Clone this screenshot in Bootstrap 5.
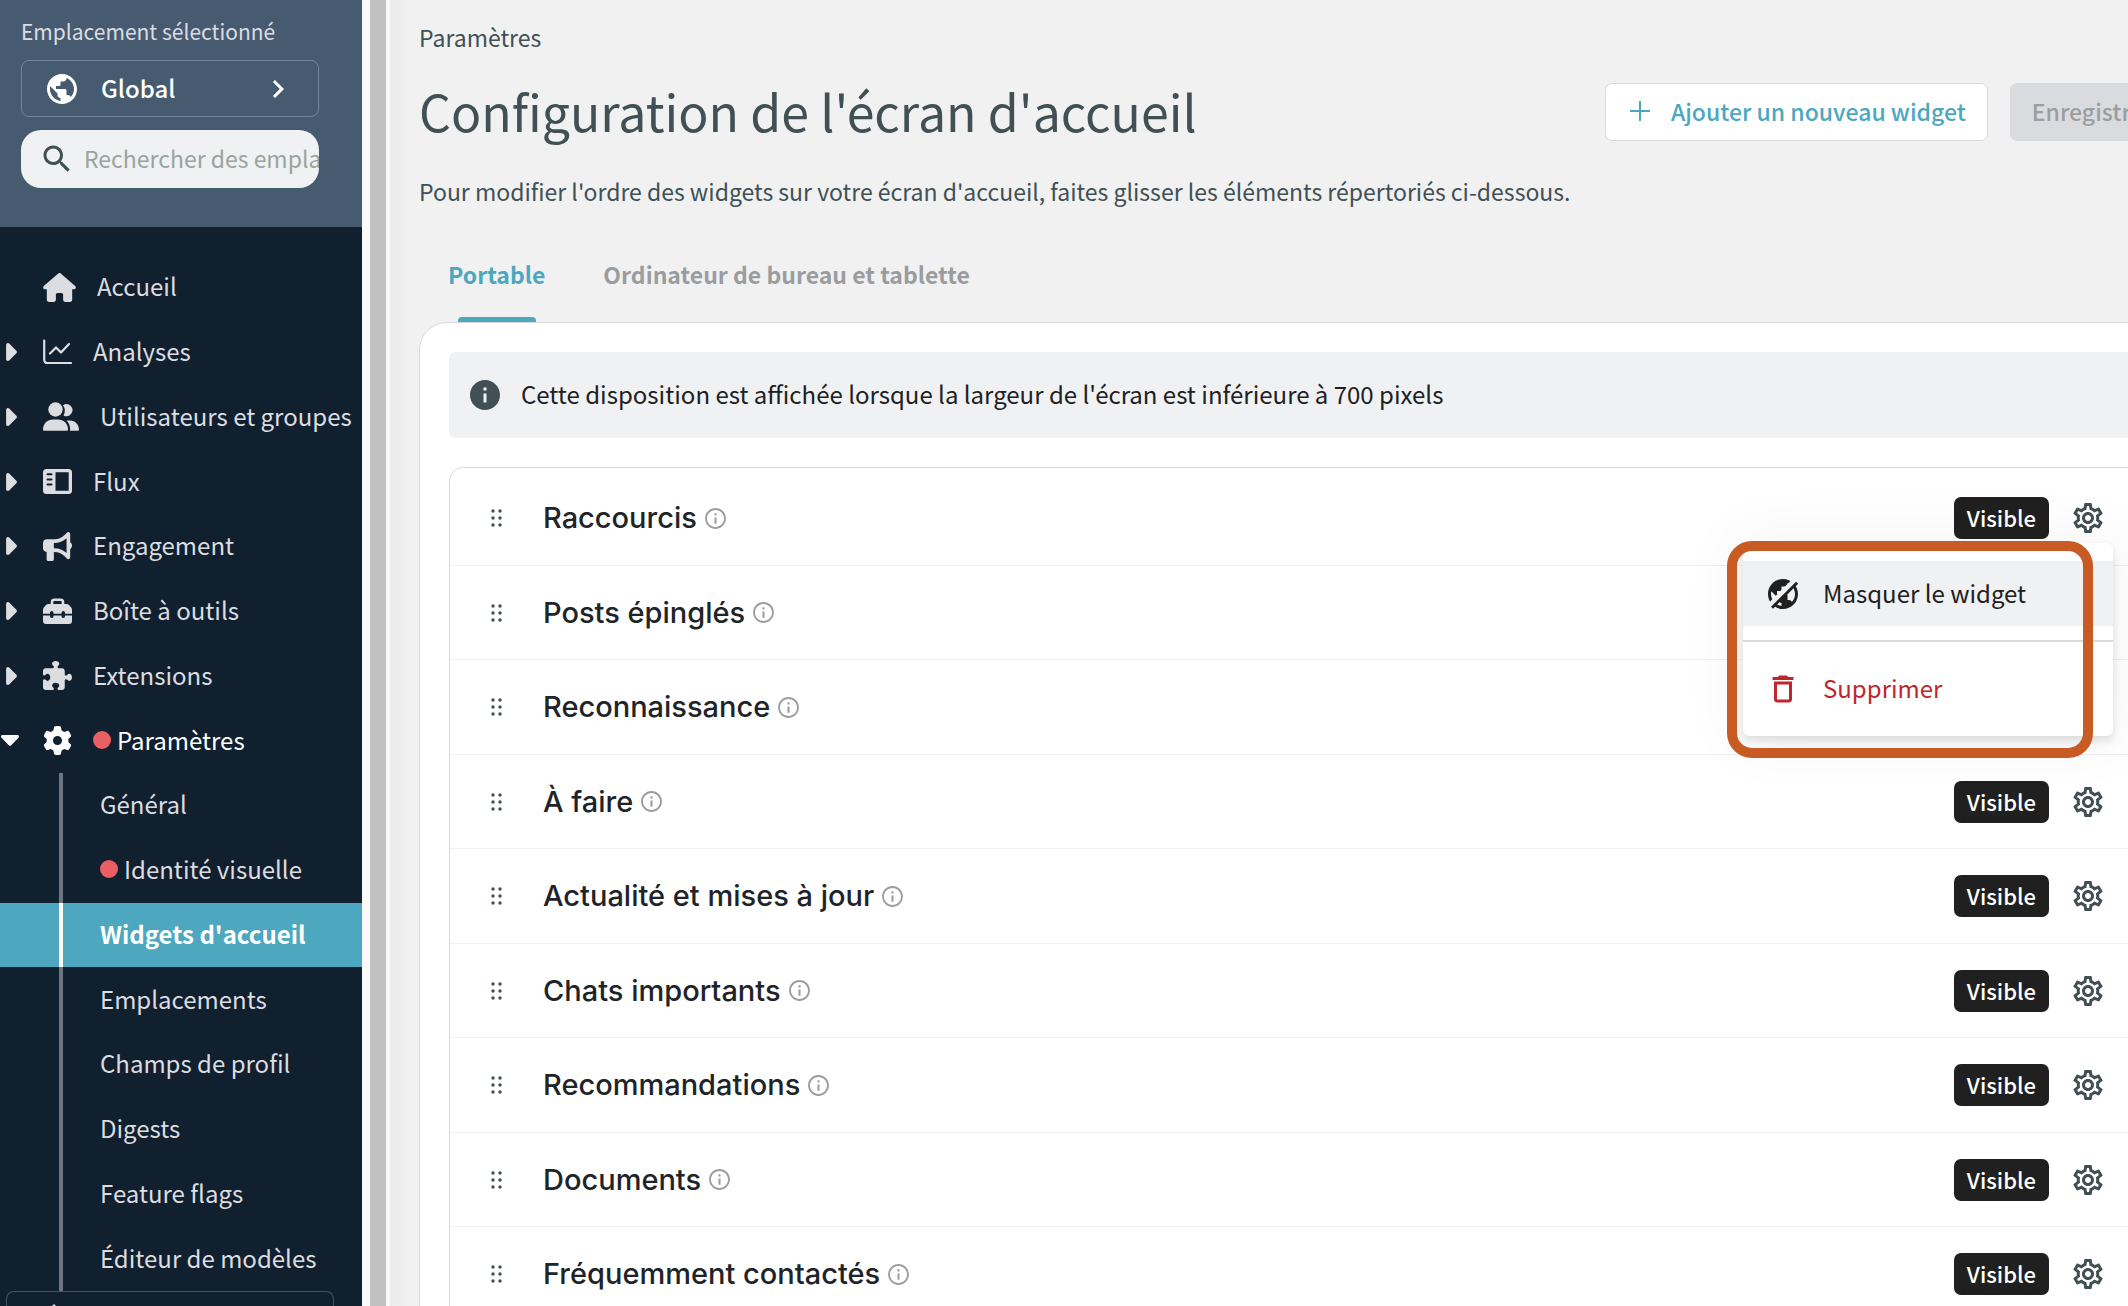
<!DOCTYPE html>
<html lang="fr">
<head>
<meta charset="utf-8">
<meta name="viewport" content="width=device-width, initial-scale=1">
<title>Configuration de l'écran d'accueil</title>
<link rel="stylesheet" href="https://cdn.jsdelivr.net/npm/bootstrap@5.3.0/dist/css/bootstrap.min.css">
<style>
  :root { --teal: #4ca7bf; --navy: #11202f; --slate: #465b70; --ink: #405055; --line: #d9dadd; }
  body { font-family: "Noto Sans CJK SC", "Noto Sans", sans-serif; font-size: 24px; line-height: 36px; color: var(--ink); background: #f1f1f1; }
  svg { display: block; flex: none; fill: currentColor; }
  .i36 { width: 36px; height: 36px; }

  /* sidebar */
  .side { width: 362px; background: var(--navy); color: #dcdde1; }
  .side-head { background: var(--slate); height: 227px; padding: 13px 43px 0 21px; }
  .side-head .caption-line { font-size: 21px; margin-bottom: 11px; }
  .loc-btn { height: 57px; border: 1px solid #73859a; border-radius: 8px; color: #fff; background: transparent; font-weight: 500; padding: 0 22px; }
  .loc-btn span { margin-left: 21px; padding-bottom: 2px; }
  .loc-search { height: 58px; margin-top: 13px; border-radius: 20px; background: #f0f1f3; color: var(--ink); padding-left: 18px; overflow: hidden; }
  .loc-search input { border: 0; background: transparent; outline: 0; min-width: 0; padding: 0 0 2px; margin-left: 9px; font-size: 23px; color: var(--ink); }
  .loc-search input::placeholder { color: #9aa49c; opacity: 1; }
  .side-nav { padding-top: 28px; min-height: 0; }
  .side-nav a { flex: 1 1 0; min-height: 0; color: inherit; text-decoration: none; white-space: nowrap; }
  .side-nav a.open { color: #fff; }
  .caret-box { width: 43px; padding-left: 6px; }
  .open .caret-box { padding-left: 1px; }
  .nav-label { margin-left: 21px; }
  .nav-label, .sub-nav a { padding-bottom: 2px; }
  .sub-nav { flex: 8 1 0; min-height: 0; }
  .sub-nav a { padding-left: 37px; margin-left: 59px; border-left: 4px solid #6d7680; }
  .sub-nav .here { margin-left: 0; padding-left: 0; background: var(--teal); color: #fff; font-weight: 700; border: 0; }
  .sub-nav .here::before { content: ""; align-self: stretch; width: 4px; margin: 0 37px -2px 59px; background: #fff; }
  .red-dot { width: 18px; height: 18px; border-radius: 50%; background: #ea6062; margin-right: 6px; }
  .side-foot { height: 15px; margin: 0 28px 0 6px; border: 1px solid #46535f; border-bottom: 0; border-radius: 8px 8px 0 0; padding: 12px 0 0 39px; overflow: hidden; }

  .scroll-track { width: 28px; background: #fafafa; border-right: 4px solid #fafafa; padding-left: 8px; }
  .scroll-track div { background: #c1c1c1; height: 100%; }

  /* content */
  .page-main { min-width: 0; background: linear-gradient(90deg, #ebebeb, #f1f1f1 20px); padding-left: 29px; overflow: hidden; font-size: 23px; }
  .page-wide { margin-right: -47px; }
  .crumb { padding-top: 19px; }
  h1 { font-size: 50px; line-height: 72px; font-weight: 400; margin: 0; color: var(--ink); }
  .head-row { margin-top: 19px; }
  .head-acts { gap: 22px; }
  .act { height: 58px; border-radius: 7px; font-weight: 500; padding: 0 21px 2px; border: 1px solid var(--line); white-space: nowrap; }
  .act-add { background: #fff; color: var(--teal); padding-left: 24px; gap: 21px; }
  .act-save, .act-save:disabled { min-width: 165px; background: #dadbdf; color: #9c9da0; border-color: #dadbdf; }
  .intro { margin-top: 27px; }
  .tabs-row { margin: 19px 0 0 29px; gap: 58px; height: 94px; }
  .tabs-row button { border: 0; background: none; padding: 28px 0 0; font-weight: 700; color: #9b9c9f; display: flex; flex-direction: column; align-items: center; justify-content: space-between; }
  .tabs-row .on { color: var(--teal); }
  .tabs-row .on::after { content: ""; width: 78px; height: 5px; border-radius: 4px 4px 0 0; background: var(--teal); }
  .panel { background: #fff; border: 1px solid var(--line); border-radius: 28px; padding: 29px; height: 1100px; }
  .notice { background: #f0f1f3; border-radius: 7px; height: 86px; padding: 0 18px; gap: 18px; font-size: 24px; }
  .notice span { color: #202020; padding-bottom: 3px; }
  .wlist { margin-top: 29px; border: 1px solid var(--line); border-radius: 14px; padding-top: 3px; }
  .wrow { height: 95px; border-bottom: 1px solid #eff0f1; padding: 0 38px 0 41px; }
  .wrow:nth-child(4n) { height: 94px; }
  .wrow:nth-child(4n+2) { height: 94px; }
  .wname { font-family: Inter, "Noto Sans", sans-serif; font-size: 29px; font-weight: 500; color: #202428; margin-left: 40px; }
  .i25 { width: 25px; height: 25px; margin-left: 6px; color: #9c9da0; }
  .tag { background: #202020; color: #fff; font-size: 22px; font-weight: 500; height: 42px; line-height: 40px; border-radius: 7px; padding: 0 13px; }
  .gear { border: 0; background: none; padding: 0; color: var(--ink); margin-left: 21px; }
  .pop { position: absolute; z-index: 2; top: 72px; right: 31px; width: 370px; background: #fff; border-radius: 7px; padding: 18px 0 15px; box-shadow: 0 5px 10px rgba(0,0,0,.12), 0 0 60px 12px rgba(0,0,0,.04); font-size: 24px; }
  .pop button { border: 0; background: none; width: 100%; height: 65px; padding: 0 22px; gap: 22px; color: #202020; }
  .pop button span { padding-bottom: 2px; }
  .pop .hov { background: #f0f1f3; }
  .pop hr { margin: 14px 0; border: 0; height: 2px; background: #dadbdf; opacity: 1; }
  .pop .del { color: #c0262d; }
  .callout { position: absolute; z-index: 3; top: 70px; right: 51px; width: 366px; height: 217px; border: 10px solid #c85a24; border-radius: 25px; pointer-events: none; }
</style>
<script src="https://cdn.jsdelivr.net/npm/bootstrap@5.3.0/dist/js/bootstrap.bundle.min.js"></script>
</head>
<body class="vh-100 overflow-hidden">
<svg width="0" height="0" class="position-absolute" aria-hidden="true">
  <symbol id="caret" viewBox="64 96 192 320"><path d="M246.6 278.6c12.500-12.500 12.500-32.800 0-45.300l-128-128c-9.200-9.200-22.900-11.900-34.900-6.900s-19.800 16.600-19.800 29.600l0 256c0 12.900 7.800 24.600 19.800 29.600s25.700 2.200 34.900-6.900l128-128z"/></symbol>
  <symbol id="globe" viewBox="0 0 24 24"><path d="M12 2C6.480 2 2 6.480 2 12s4.480 10 10 10 10-4.480 10-10S17.520 2 12 2zm-1 17.930c-3.950-.49-7-3.850-7-7.930 0-.62.08-1.210.21-1.790L9 15v1c0 1.100.9 2 2 2v1.930zm6.900-2.540c-.26-.81-1-1.390-1.900-1.390h-1v-3c0-.55-.45-1-1-1H8v-2h2c.55 0 1-.45 1-1V7h2c1.100 0 2-.9 2-2v-.41c2.930 1.190 5 4.060 5 7.410 0 2.080-.8 3.970-2.100 5.390z"/></symbol>
  <symbol id="info" viewBox="0 0 24 24"><path d="M11 7h2v2h-2zm0 4h2v6h-2zm1-9C6.480 2 2 6.480 2 12s4.480 10 10 10 10-4.480 10-10S17.520 2 12 2zm0 18.200c-4.500 0-8.200-3.700-8.200-8.200S7.500 3.800 12 3.800s8.200 3.700 8.200 8.200-3.700 8.200-8.200 8.200z"/></symbol>
  <symbol id="drag" viewBox="0 0 12 18"><circle cx="2" cy="2" r="1.700"/><circle cx="9" cy="2" r="1.700"/><circle cx="2" cy="9" r="1.700"/><circle cx="9" cy="9" r="1.700"/><circle cx="2" cy="16" r="1.700"/><circle cx="9" cy="16" r="1.700"/></symbol>
  <symbol id="cog" viewBox="0 0 24 24"><path d="M19.430 12.980c.04-.32.07-.64.07-.98 0-.34-.03-.66-.07-.98l2.110-1.650c.19-.15.24-.42.12-.64l-2-3.460c-.09-.16-.26-.25-.44-.25-.06 0-.12.01-.17.03l-2.490 1c-.52-.4-1.080-.73-1.690-.98l-.38-2.650C14.460 2.180 14.250 2 14 2h-4c-.25 0-.46.18-.49.42l-.38 2.650c-.61.25-1.170.59-1.690.98l-2.490-1c-.06-.02-.12-.03-.18-.03-.17 0-.34.09-.43.25l-2 3.460c-.13.22-.07.49.12.64l2.110 1.650c-.04.32-.07.65-.07.98 0 .33.03.66.07.98l-2.110 1.650c-.19.15-.24.42-.12.64l2 3.460c.09.16.26.25.44.25.06 0 .12-.01.17-.03l2.490-1c.52.4 1.080.73 1.690.98l.38 2.650c.03.24.24.42.49.42h4c.25 0 .46-.18.49-.42l.38-2.650c.61-.25 1.170-.59 1.690-.98l2.490 1c.06.02.12.03.18.03.17 0 .34-.09.43-.25l2-3.460c.12-.22.07-.49-.12-.64l-2.110-1.650zm-1.980-1.710c.04.31.05.52.05.73 0 .21-.02.43-.05.73l-.14 1.130.89.7 1.080.84-.7 1.210-1.270-.51-1.040-.42-.9.68c-.43.32-.84.56-1.250.73l-1.060.43-.16 1.130-.2 1.350h-1.400l-.19-1.350-.16-1.130-1.060-.43c-.43-.18-.83-.41-1.230-.71l-.91-.7-1.060.43-1.270.51-.7-1.210 1.080-.84.89-.7-.14-1.130c-.03-.31-.05-.54-.05-.74s.02-.43.05-.73l.14-1.130-.89-.7-1.080-.84.7-1.210 1.270.51 1.040.42.9-.68c.43-.32.84-.56 1.250-.73l1.060-.43.16-1.130.2-1.350h1.390l.19 1.350.16 1.130 1.060.43c.43.18.83.41 1.230.71l.91.7 1.060-.43 1.270-.51.7 1.210-1.070.85-.89.7.14 1.130zM12 8c-2.210 0-4 1.790-4 4s1.790 4 4 4 4-1.790 4-4-1.790-4-4-4zm0 6c-1.100 0-2-.9-2-2s.9-2 2-2 2 .9 2 2-.9 2-2 2z"/></symbol>
</svg>

<div class="d-flex h-100">
  <aside class="side d-flex flex-column flex-shrink-0 h-100 overflow-hidden">
    <div class="side-head flex-shrink-0">
      <div class="caption-line">Emplacement sélectionné</div>
      <button type="button" class="loc-btn d-flex align-items-center w-100">
        <svg class="i36"><use href="#globe"/></svg>
        <span class="me-auto">Global</span>
        <svg class="i36" viewBox="0 0 24 24"><path d="M10 6 8.590 7.410 13.170 12l-4.580 4.590L10 18l6-6z"/></svg>
      </button>
      <label class="loc-search d-flex align-items-center">
        <svg class="i36" viewBox="0 0 24 24"><path d="M15.500 14h-.79l-.28-.27C15.410 12.590 16 11.110 16 9.500 16 5.910 13.090 3 9.500 3S3 5.910 3 9.500 5.910 16 9.500 16c1.610 0 3.090-.59 4.230-1.570l.27.28v.79l5 4.990L20.490 19l-4.990-5zm-6 0C7.010 14 5 11.990 5 9.500S7.010 5 9.500 5 14 7.010 14 9.500 11.990 14 9.500 14z"/></svg>
        <input type="text" class="flex-fill" aria-label="Rechercher" placeholder="Rechercher des emplacements">
      </label>
    </div>
    <nav class="side-nav d-flex flex-column flex-fill">
      <a href="#" class="d-flex align-items-center"><span class="caret-box"></span>
        <svg width="33" height="29" viewBox="0 0 576 512"><path d="M575.800 255.500c0 18-15 32.100-32 32.100h-32l.7 160.200c0 2.700-.2 5.400-.5 8.100V472c0 22.100-17.900 40-40 40H392c-22.100 0-40-17.900-40-40v-88c0-17.700-14.300-32-32-32h-64c-17.700 0-32 14.300-32 32v88c0 22.100-17.900 40-40 40h-80c-22.100 0-40-17.900-40-40V287.600H32c-18 0-32-14-32-32.100c0-9 3-17 10-24L266.400 8c7-7 15-8 22-8s15 2 21 7L564.800 231.500c8 7 12 15 11 24z"/></svg>
        <span class="nav-label">Accueil</span></a>
      <a href="#" class="d-flex align-items-center"><span class="caret-box"><svg width="11" height="18"><use href="#caret"/></svg></span>
        <svg width="29" height="29" viewBox="0 0 29 29"><path d="M1.200 2.500V22a3 3 0 0 0 3 3H28M7 15.500l6-6 5 5 8-8.500" fill="none" stroke="currentColor" stroke-width="2.200" stroke-linecap="round" stroke-linejoin="round"/></svg>
        <span class="nav-label">Analyses</span></a>
      <a href="#" class="d-flex align-items-center"><span class="caret-box"><svg width="11" height="18"><use href="#caret"/></svg></span>
        <svg width="36" height="29" viewBox="0 0 36 29"><circle cx="12.500" cy="7.500" r="7.200"/><path d="M0 27.500C0 21.500 4.500 17.500 10 17.500h5c5.500 0 10 4 10 10 0 .8-.6 1.300-1.300 1.300H1.300C.6 28.800 0 28.300 0 27.500z"/><path d="M20 3.200A6 6 0 1 1 20.500 13.400 9.500 9.500 0 0 0 20 3.200zM23.500 18.500H27c5 0 9 4 9 9 0 .8-.6 1.300-1.300 1.300h-8c.3-.5.4-1 .4-1.500 0-3.600-1.300-6.600-3.600-8.800z"/></svg>
        <span class="nav-label">Utilisateurs et groupes</span></a>
      <a href="#" class="d-flex align-items-center"><span class="caret-box"><svg width="11" height="18"><use href="#caret"/></svg></span>
        <svg width="29" height="25" viewBox="0 0 29 25"><path fill-rule="evenodd" d="M3.500 0h22A3.500 3.500 0 0 1 29 3.500v18a3.500 3.500 0 0 1-3.500 3.500h-22A3.500 3.500 0 0 1 0 21.500v-18A3.500 3.500 0 0 1 3.500 0zM12.500 3.200v18.600h13.200V3.200zM4.500 4.200a1 1 0 0 0 0 2h4a1 1 0 0 0 0-2zM4.500 9.400a1 1 0 0 0 0 2h4a1 1 0 0 0 0-2zM4.500 14.600a1 1 0 0 0 0 2h4a1 1 0 0 0 0-2z"/></svg>
        <span class="nav-label">Flux</span></a>
      <a href="#" class="d-flex align-items-center"><span class="caret-box"><svg width="11" height="18"><use href="#caret"/></svg></span>
        <svg width="29" height="29" viewBox="0 0 512 512"><path d="M480 32c0-12.900-7.800-24.600-19.800-29.600s-25.700-2.200-34.900 6.900L381.700 53c-48 48-113.100 75-181 75H64c-35.300 0-64 28.700-64 64v96c0 35.300 28.700 64 64 64v128c0 17.700 14.300 32 32 32h64c17.700 0 32-14.300 32-32V352h8.700c67.900 0 133 27 181 75l43.600 43.600c9.200 9.200 22.900 11.900 34.900 6.900s19.800-16.600 19.800-29.600V300.400c18.600-8.800 32-32.500 32-60.400s-13.400-51.600-32-60.400V32zm-64 76.700v262.600C357.200 317.800 280.500 288 200.700 288H192v-96h8.700c79.800 0 156.500-29.800 215.300-83.300z"/></svg>
        <span class="nav-label">Engagement</span></a>
      <a href="#" class="d-flex align-items-center"><span class="caret-box"><svg width="11" height="18"><use href="#caret"/></svg></span>
        <svg width="29" height="26" viewBox="0 0 29 26"><path d="M9 7V4a2.300 2.300 0 0 1 2.300-2.300h6.400A2.300 2.300 0 0 1 20 4v3" fill="none" stroke="currentColor" stroke-width="2.600"/><path d="M5.500 6h18c1 0 1.800.4 2.500 1l2 2.200c.6.700 1 1.500 1 2.500v4h-7v-1a1.500 1.500 0 0 0-3.500 0v1H10.500v-1a1.500 1.500 0 0 0-3.500 0v1H0v-4c0-1 .4-1.800 1-2.500L3 7c.7-.6 1.500-1 2.500-1zM0 17.500h7v.8a1.700 1.700 0 0 0 3.500 0v-.8h8v.8a1.700 1.700 0 0 0 3.500 0v-.8h7V23a3 3 0 0 1-3 3H3a3 3 0 0 1-3-3z"/></svg>
        <span class="nav-label">Boîte à outils</span></a>
      <a href="#" class="d-flex align-items-center"><span class="caret-box"><svg width="11" height="18"><use href="#caret"/></svg></span>
        <svg width="29" height="29" viewBox="0 0 512 512"><path d="M192 104.800c0-9.200-5.800-17.300-13.200-22.800C167.200 73.300 160 61.300 160 48c0-26.500 28.700-48 64-48s64 21.500 64 48c0 13.300-7.200 25.300-18.800 34c-7.400 5.500-13.200 13.600-13.200 22.800c0 12.800 10.400 23.200 23.200 23.200H336c26.500 0 48 21.500 48 48v56.800c0 12.800 10.400 23.200 23.200 23.200c9.200 0 17.300-5.800 22.800-13.200c8.700-11.600 20.700-18.800 34-18.800c26.500 0 48 28.700 48 64s-21.500 64-48 64c-13.300 0-25.300-7.200-34-18.800c-5.500-7.400-13.600-13.200-22.800-13.200c-12.800 0-23.200 10.400-23.200 23.200V464c0 26.500-21.500 48-48 48H279.200c-12.800 0-23.200-10.400-23.200-23.200c0-9.200 5.800-17.300 13.200-22.800c11.600-8.700 18.800-20.700 18.800-34c0-26.500-28.700-48-64-48s-64 21.500-64 48c0 13.300 7.200 25.300 18.800 34c7.400 5.500 13.200 13.600 13.200 22.800c0 12.800-10.400 23.200-23.200 23.200H48c-26.500 0-48-21.500-48-48V343.200C0 330.400 10.400 320 23.200 320c9.200 0 17.300 5.800 22.800 13.200C54.700 344.800 66.700 352 80 352c26.500 0 48-28.700 48-64s-21.500-64-48-64c-13.300 0-25.300 7.200-34 18.800C40.500 250.200 32.400 256 23.200 256C10.400 256 0 245.600 0 232.800V176c0-26.500 21.500-48 48-48H168.800c12.800 0 23.200-10.400 23.200-23.200z"/></svg>
        <span class="nav-label">Extensions</span></a>
      <a href="#" class="open d-flex align-items-center"><span class="caret-box"><svg width="18" height="11" viewBox="0 0 18 11"><path d="M1.600 0h14.800c1.500 0 2.200 1.700 1.100 2.700l-7.300 7.600c-.7.700-1.700.7-2.400 0L.5 2.700C-.6 1.700.1 0 1.600 0z"/></svg></span>
        <svg width="29" height="29" viewBox="0 0 512 512"><path d="M495.900 166.600c3.200 8.700.5 18.400-6.400 24.600l-43.300 39.400c1.100 8.300 1.700 16.800 1.700 25.400s-.6 17.100-1.700 25.400l43.300 39.400c6.900 6.200 9.600 15.900 6.400 24.600c-4.400 11.900-9.700 23.300-15.800 34.300l-4.700 8.100c-6.600 11-14 21.400-22.100 31.200c-5.900 7.200-15.700 9.600-24.500 6.800l-55.700-17.700c-13.400 10.300-28.200 18.900-44 25.400l-12.500 57.100c-2 9.100-9 16.300-18.200 17.800c-13.800 2.300-28 3.500-42.500 3.500s-28.700-1.200-42.500-3.500c-9.200-1.500-16.200-8.700-18.200-17.800l-12.500-57.100c-15.800-6.500-30.600-15.100-44-25.400L83.100 425.900c-8.800 2.800-18.600.3-24.500-6.800c-8.100-9.800-15.500-20.200-22.100-31.200l-4.700-8.100c-6.100-11-11.400-22.400-15.800-34.300c-3.200-8.700-.5-18.400 6.400-24.600l43.300-39.400C64.600 273.100 64 264.600 64 256s.6-17.100 1.700-25.400L22.400 191.200c-6.900-6.200-9.600-15.900-6.400-24.600c4.400-11.900 9.700-23.300 15.800-34.300l4.700-8.100c6.600-11 14-21.400 22.100-31.200c5.900-7.200 15.700-9.600 24.500-6.800l55.700 17.700c13.400-10.300 28.200-18.900 44-25.400l12.500-57.100c2-9.100 9-16.300 18.200-17.800C227.300 1.200 241.500 0 256 0s28.700 1.200 42.500 3.500c9.200 1.500 16.200 8.700 18.200 17.800l12.500 57.100c15.800 6.500 30.600 15.100 44 25.400l55.700-17.700c8.800-2.800 18.600-.3 24.500 6.800c8.100 9.800 15.500 20.200 22.100 31.200l4.700 8.100c6.100 11 11.400 22.400 15.800 34.300zM256 336a80 80 0 1 0 0-160 80 80 0 1 0 0 160z"/></svg>
        <span class="nav-label d-flex align-items-center"><i class="red-dot"></i>Paramètres</span></a>
      <div class="sub-nav d-flex flex-column">
        <a href="#" class="d-flex align-items-center">Général</a>
        <a href="#" class="d-flex align-items-center"><i class="red-dot"></i>Identité visuelle</a>
        <a href="#" class="here d-flex align-items-center" aria-current="page">Widgets d'accueil</a>
        <a href="#" class="d-flex align-items-center">Emplacements</a>
        <a href="#" class="d-flex align-items-center">Champs de profil</a>
        <a href="#" class="d-flex align-items-center">Digests</a>
        <a href="#" class="d-flex align-items-center">Feature flags</a>
        <a href="#" class="d-flex align-items-center">Éditeur de modèles</a>
      </div>
    </nav>
    <div class="side-foot flex-shrink-0"><svg width="16" height="16" viewBox="0 0 16 16"><path d="M8 0l8 8H0z"/></svg></div>
  </aside>
  <div class="scroll-track flex-shrink-0"><div></div></div>

  <main class="page-main flex-fill h-100">
    <div class="page-wide">
      <div class="crumb">Paramètres</div>
      <div class="head-row d-flex align-items-center justify-content-between">
        <h1>Configuration de l'écran d'accueil</h1>
        <div class="head-acts d-flex pt-1">
          <button type="button" class="act act-add d-flex align-items-center"><svg width="20" height="20" viewBox="0 0 20 20"><path d="M9 0h2v9h9v2h-9v9H9v-9H0V9h9z"/></svg><span>Ajouter un nouveau widget</span></button>
          <button type="button" class="act act-save" disabled>Enregistrer</button>
        </div>
      </div>
      <div class="intro">Pour modifier l'ordre des widgets sur votre écran d'accueil, faites glisser les éléments répertoriés ci-dessous.</div>
      <div class="tabs-row d-flex" role="tablist">
        <button type="button" role="tab" class="on" aria-selected="true">Portable</button>
        <button type="button" role="tab" aria-selected="false">Ordinateur de bureau et tablette</button>
      </div>
      <section class="panel">
        <div class="notice d-flex align-items-center">
          <svg class="i36" viewBox="0 0 24 24"><path d="M12 2C6.480 2 2 6.480 2 12s4.480 10 10 10 10-4.480 10-10S17.520 2 12 2zm1 15h-2v-6h2v6zm0-8h-2V7h2v2z"/></svg>
          <span>Cette disposition est affichée lorsque la largeur de l'écran est inférieure à 700 pixels</span>
        </div>
        <div class="wlist">
          <div class="wrow d-flex align-items-center position-relative"><svg width="12" height="18"><use href="#drag"/></svg><span class="wname">Raccourcis</span><svg class="i25"><use href="#info"/></svg><span class="tag ms-auto">Visible</span><button type="button" class="gear" aria-label="Options" aria-expanded="true"><svg class="i36"><use href="#cog"/></svg></button>
            <div class="pop">
              <button type="button" class="hov d-flex align-items-center"><svg class="i36" viewBox="0 0 24 24"><mask id="cut"><path fill="#fff" d="M0 0h24v24H0z"/><path d="M2.500 20.700 21.200 2" stroke="#000" stroke-width="4" /></mask><g mask="url(#cut)"><use href="#globe" width="24" height="24"/></g><path d="M4.700 21.200 21.400 4.500" stroke="currentColor" stroke-width="1.900"/></svg><span>Masquer le widget</span></button>
              <hr>
              <button type="button" class="del d-flex align-items-center"><svg class="i36" viewBox="0 0 24 24"><path d="M6 19c0 1.100.9 2 2 2h8c1.100 0 2-.9 2-2V7H6v12zM8 9h8v10H8V9zm7.500-5l-1-1h-5l-1 1H5v2h14V4z"/></svg><span>Supprimer</span></button>
            </div>
            <div class="callout"></div>
          </div>
          <div class="wrow d-flex align-items-center"><svg width="12" height="18"><use href="#drag"/></svg><span class="wname">Posts épinglés</span><svg class="i25"><use href="#info"/></svg></div>
          <div class="wrow d-flex align-items-center"><svg width="12" height="18"><use href="#drag"/></svg><span class="wname">Reconnaissance</span><svg class="i25"><use href="#info"/></svg></div>
          <div class="wrow d-flex align-items-center"><svg width="12" height="18"><use href="#drag"/></svg><span class="wname">À faire</span><svg class="i25"><use href="#info"/></svg><span class="tag ms-auto">Visible</span><button type="button" class="gear" aria-label="Options"><svg class="i36"><use href="#cog"/></svg></button></div>
          <div class="wrow d-flex align-items-center"><svg width="12" height="18"><use href="#drag"/></svg><span class="wname">Actualité et mises à jour</span><svg class="i25"><use href="#info"/></svg><span class="tag ms-auto">Visible</span><button type="button" class="gear" aria-label="Options"><svg class="i36"><use href="#cog"/></svg></button></div>
          <div class="wrow d-flex align-items-center"><svg width="12" height="18"><use href="#drag"/></svg><span class="wname">Chats importants</span><svg class="i25"><use href="#info"/></svg><span class="tag ms-auto">Visible</span><button type="button" class="gear" aria-label="Options"><svg class="i36"><use href="#cog"/></svg></button></div>
          <div class="wrow d-flex align-items-center"><svg width="12" height="18"><use href="#drag"/></svg><span class="wname">Recommandations</span><svg class="i25"><use href="#info"/></svg><span class="tag ms-auto">Visible</span><button type="button" class="gear" aria-label="Options"><svg class="i36"><use href="#cog"/></svg></button></div>
          <div class="wrow d-flex align-items-center"><svg width="12" height="18"><use href="#drag"/></svg><span class="wname">Documents</span><svg class="i25"><use href="#info"/></svg><span class="tag ms-auto">Visible</span><button type="button" class="gear" aria-label="Options"><svg class="i36"><use href="#cog"/></svg></button></div>
          <div class="wrow d-flex align-items-center"><svg width="12" height="18"><use href="#drag"/></svg><span class="wname">Fréquemment contactés</span><svg class="i25"><use href="#info"/></svg><span class="tag ms-auto">Visible</span><button type="button" class="gear" aria-label="Options"><svg class="i36"><use href="#cog"/></svg></button></div>
        </div>
      </section>
    </div>
  </main>
</div>
</body>
</html>
